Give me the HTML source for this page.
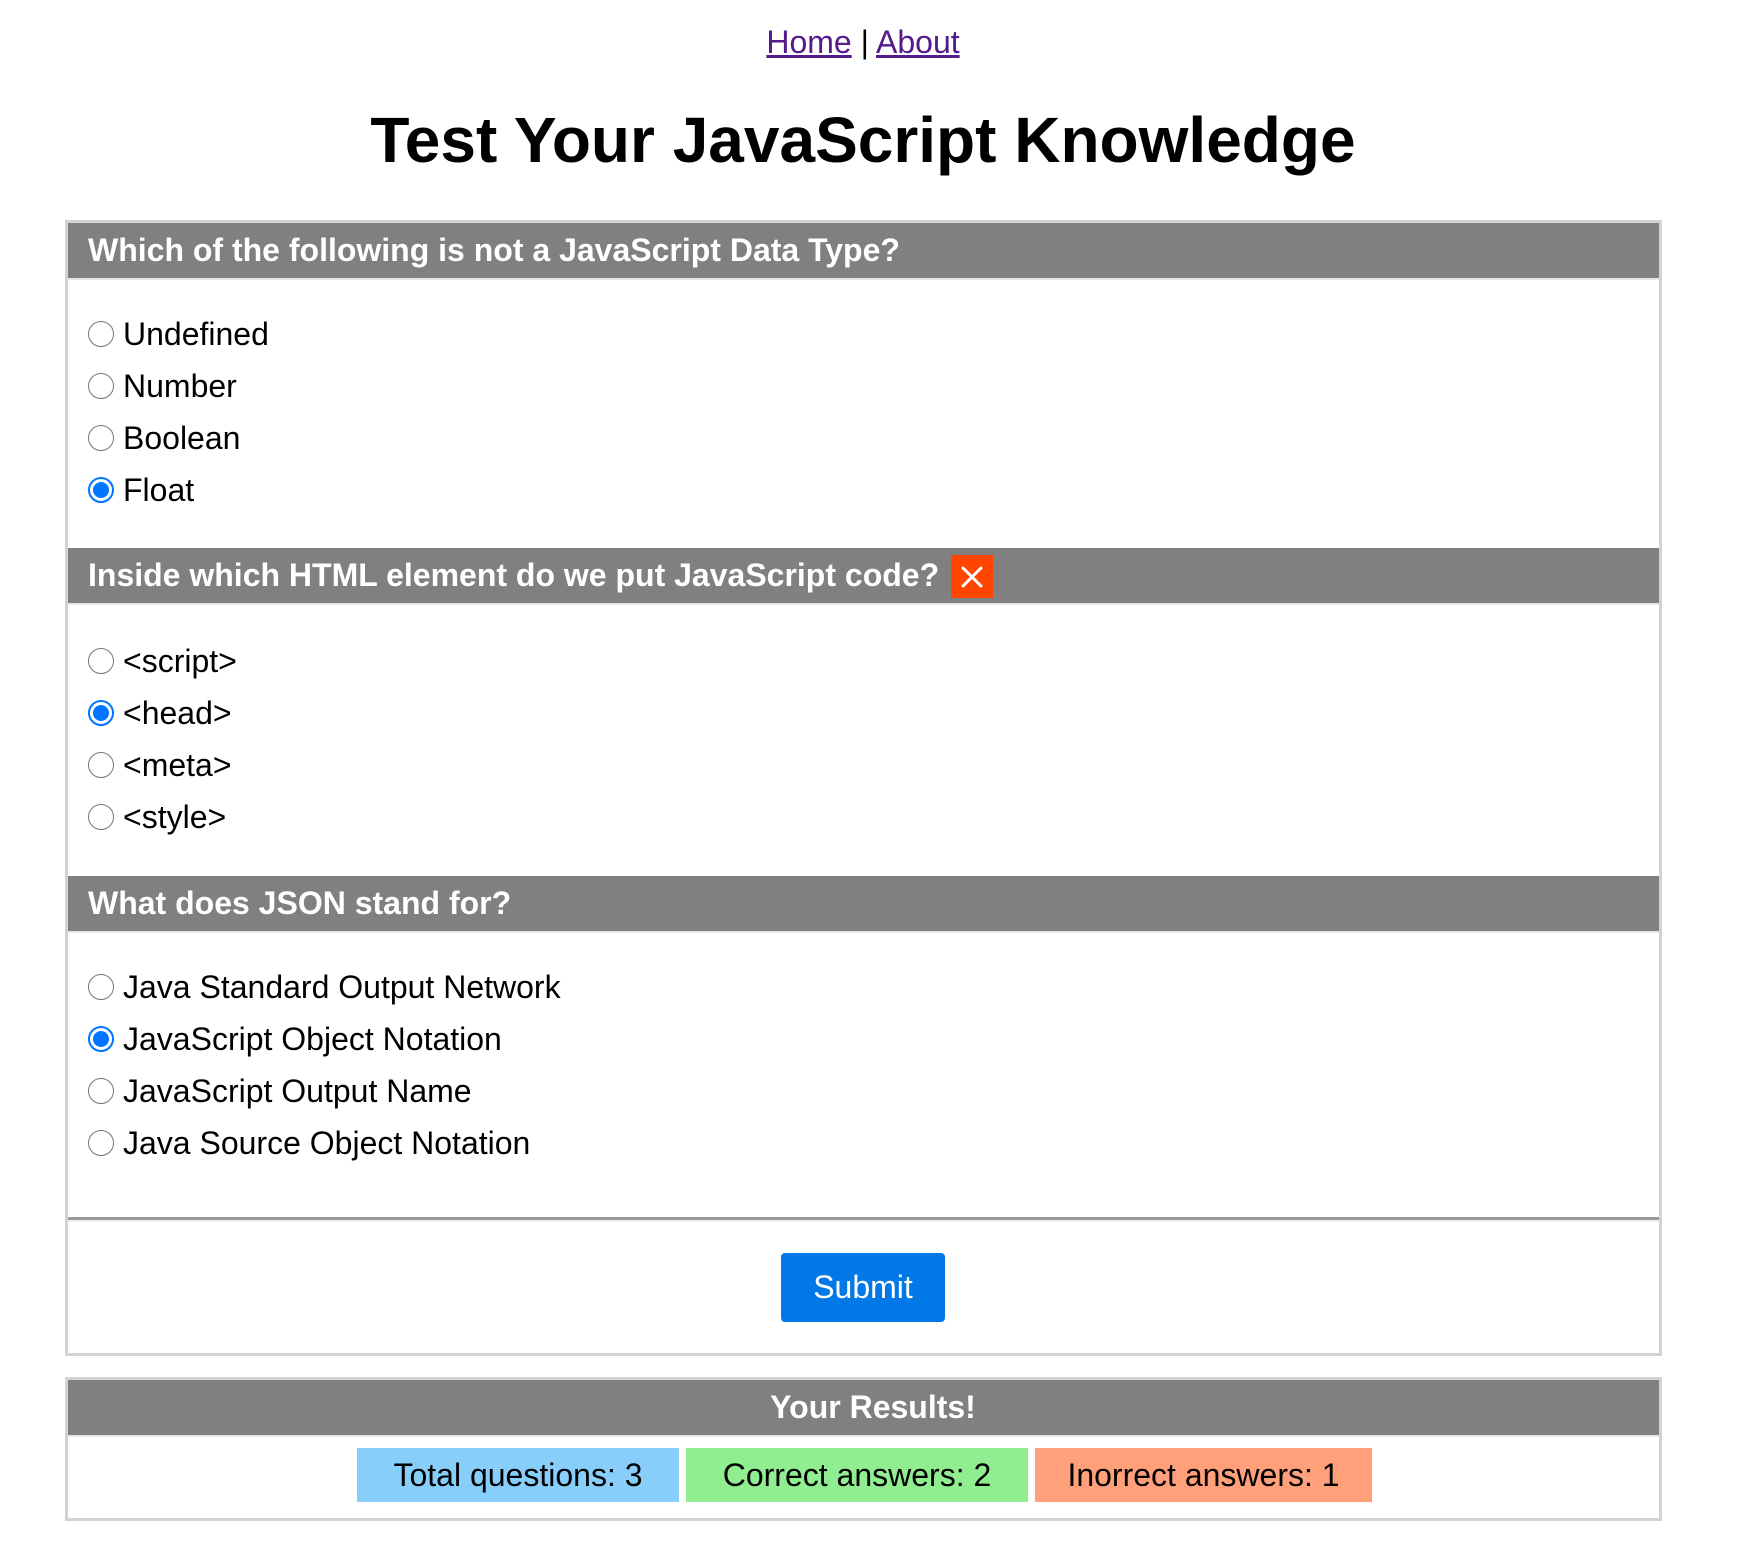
<!DOCTYPE html>
<html><head><meta charset="utf-8"><style>
*{margin:0;padding:0;box-sizing:border-box}
body{width:1740px;height:1563px;background:#fff;font-family:"Liberation Sans",Arial,sans-serif;color:#000;position:relative;overflow:hidden}
.abs{position:absolute}
.nav{left:0;width:1726px;top:22px;text-align:center;font-size:32px;line-height:40px}
.nav a{color:#551a8b;text-decoration:underline}
h1{position:absolute;left:0;width:1726px;top:100px;text-align:center;font-size:64px;line-height:80px;font-weight:bold}
.box{position:absolute;left:65px;width:1597px;border:3px solid #d3d3d3}
.hdr{position:absolute;left:0;right:0;height:55px;background:#808080;color:#fff;font-weight:bold;font-size:32px;line-height:55px;padding-left:20px;border-bottom:2px solid #e6e6e6;box-sizing:content-box}
.opt{position:absolute;left:20px;font-size:32px;line-height:40px;height:40px}
.opt .r{position:absolute;left:0;top:7px;width:26px;height:26px;border-radius:50%;border:1.5px solid #767676;background:#fff}
.opt .r.c{border:2px solid #0075ff}
.opt .r.c:after{content:"";position:absolute;left:3px;top:3px;width:16px;height:16px;border-radius:50%;background:#0075ff}
.opt span{position:absolute;left:35px;top:0;white-space:nowrap}
.x{position:absolute;left:883px;top:7px;width:42px;height:43px;background:#ff4500}
.btn{position:absolute;left:713px;top:1030px;width:164px;height:69px;background:#0078e7;border-radius:4px;color:#fff;font-size:32px;line-height:69px;text-align:center}
.badge{position:absolute;top:68px;height:54px;font-size:32px;line-height:54px;text-align:center}
</style></head><body>
<div class="abs nav"><a>Home</a> | <a>About</a></div>
<h1>Test Your JavaScript Knowledge</h1>

<div class="box" style="top:220px;height:1136px">
  <div class="hdr" style="top:0">Which of the following is not a JavaScript Data Type?</div>
  <div class="opt" style="top:91px"><div class="r"></div><span>Undefined</span></div>
  <div class="opt" style="top:143px"><div class="r"></div><span>Number</span></div>
  <div class="opt" style="top:195px"><div class="r"></div><span>Boolean</span></div>
  <div class="opt" style="top:247px"><div class="r c"></div><span>Float</span></div>

  <div class="hdr" style="top:325px">Inside which HTML element do we put JavaScript code?
    <div class="x"><svg width="42" height="43" viewBox="0 0 42 43"><path d="M12 13 L30 31 M30 13 L12 31" stroke="#fff" stroke-width="3" stroke-linecap="round"/></svg></div>
  </div>
  <div class="opt" style="top:418px"><div class="r"></div><span>&lt;script&gt;</span></div>
  <div class="opt" style="top:470px"><div class="r c"></div><span>&lt;head&gt;</span></div>
  <div class="opt" style="top:522px"><div class="r"></div><span>&lt;meta&gt;</span></div>
  <div class="opt" style="top:574px"><div class="r"></div><span>&lt;style&gt;</span></div>

  <div class="hdr" style="top:653px">What does JSON stand for?</div>
  <div class="opt" style="top:744px"><div class="r"></div><span>Java Standard Output Network</span></div>
  <div class="opt" style="top:796px"><div class="r c"></div><span>JavaScript Object Notation</span></div>
  <div class="opt" style="top:848px"><div class="r"></div><span>JavaScript Output Name</span></div>
  <div class="opt" style="top:900px"><div class="r"></div><span>Java Source Object Notation</span></div>

  <div class="abs" style="left:0;right:0;top:994px;height:3px;background:#999"></div>
  <div class="abs" style="left:0;right:0;top:997px;height:2px;background:#eee"></div>
  <div class="btn">Submit</div>
</div>

<div class="box" style="top:1377px;height:144px">
  <div class="hdr" style="top:0;padding-left:19px;text-align:center">Your Results!</div>
  <div class="badge" style="left:289px;width:322px;background:#87cefa">Total questions: 3</div>
  <div class="badge" style="left:618px;width:342px;background:#90ee90">Correct answers: 2</div>
  <div class="badge" style="left:967px;width:337px;background:#ffa07a">Inorrect answers: 1</div>
</div>
</body></html>
